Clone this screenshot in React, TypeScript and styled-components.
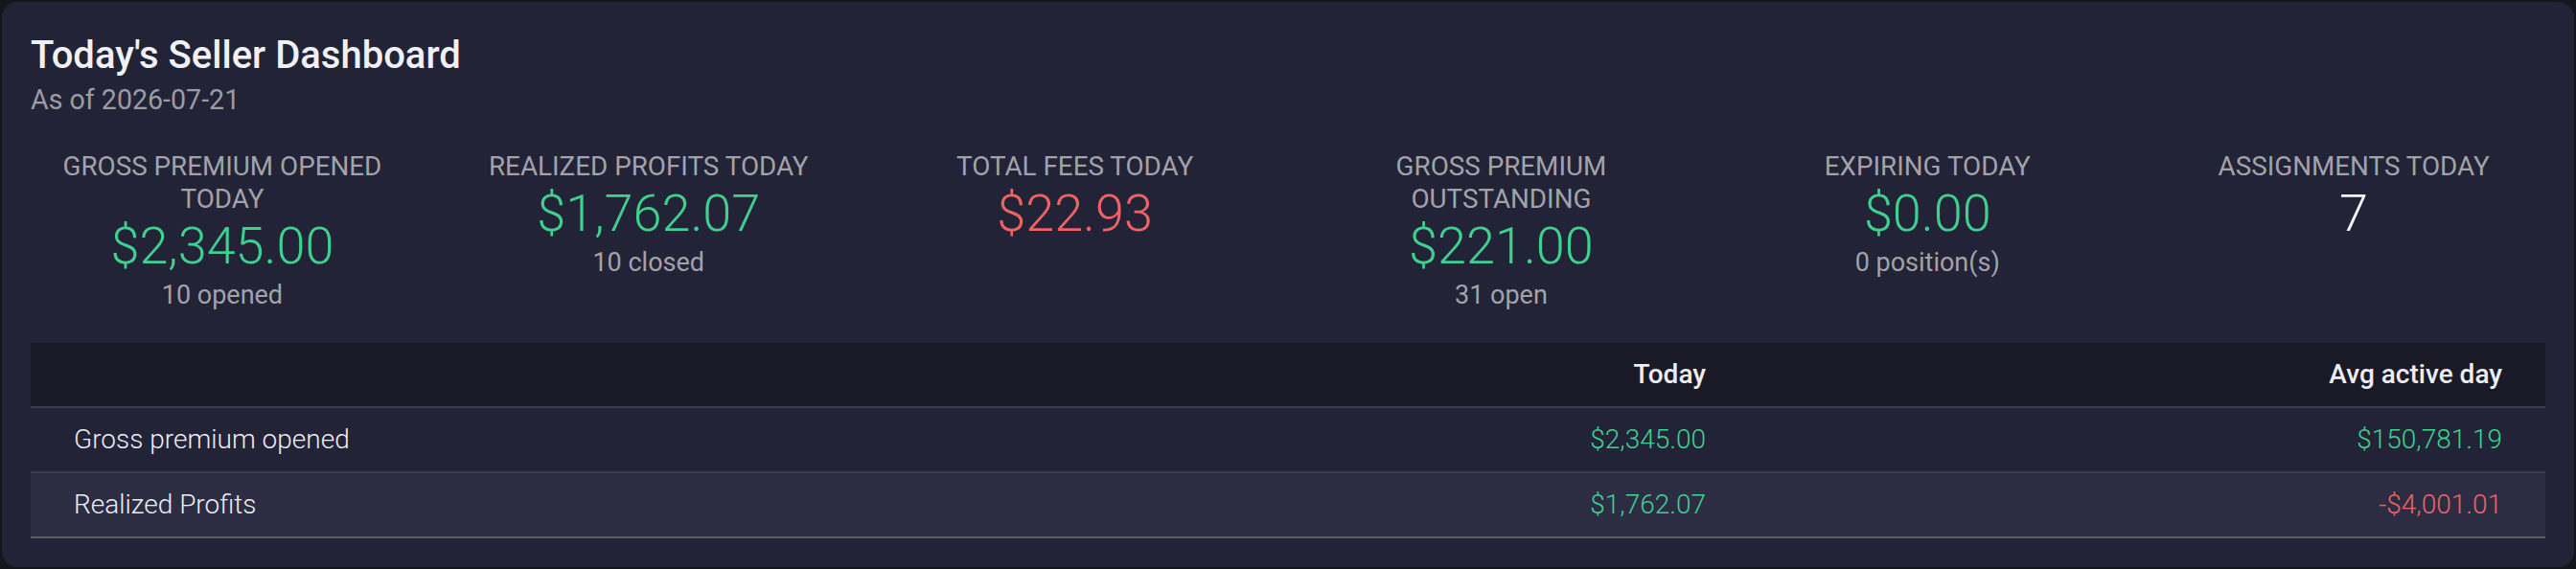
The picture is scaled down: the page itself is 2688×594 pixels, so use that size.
import React from "react";
import styled, { createGlobalStyle } from "styled-components";

type Tone = "up" | "down" | "plain";

interface Stat {
  label: string;
  value: string;
  tone: Tone;
  note?: string;
}

interface Row {
  name: string;
  today: string;
  todayTone: Tone;
  avg: string;
  avgTone: Tone;
}

const stats: Stat[] = [
  { label: "Gross premium opened today", value: "$2,345.00", tone: "up", note: "10 opened" },
  { label: "Realized profits today", value: "$1,762.07", tone: "up", note: "10 closed" },
  { label: "Total fees today", value: "$22.93", tone: "down" },
  { label: "Gross premium outstanding", value: "$221.00", tone: "up", note: "31 open" },
  { label: "Expiring today", value: "$0.00", tone: "up", note: "0 position(s)" },
  { label: "Assignments today", value: "7", tone: "plain" },
];

const rows: Row[] = [
  { name: "Gross premium opened", today: "$2,345.00", todayTone: "up", avg: "$150,781.19", avgTone: "up" },
  { name: "Realized Profits", today: "$1,762.07", todayTone: "up", avg: "-$4,001.01", avgTone: "down" },
];

const toneColor = (tone: Tone) =>
  tone === "up" ? "#3fd08f" : tone === "down" ? "#ef6363" : "#f2f2f7";

const GlobalStyle = createGlobalStyle`
  html, body {
    margin: 0;
    padding: 0;
    background: #15151e;
    font-family: Roboto, "Liberation Sans", sans-serif;
  }
  #root {
    height: 594px;
    overflow: hidden;
  }
`;

const Card = styled.section`
  margin: 2px;
  height: 590px;
  box-sizing: border-box;
  padding: 32px 30px;
  background: #222336;
  border-radius: 16px;
`;

const Title = styled.h1`
  margin: 0;
  font-size: 40px;
  line-height: 48px;
  font-weight: 500;
  color: #f0f0f7;
`;

const Subtitle = styled.p`
  margin: 2px 0 0;
  font-size: 28.6px;
  line-height: 40px;
  color: #9b9ba3;
`;

const StatGrid = styled.div`
  display: grid;
  grid-template-columns: repeat(6, 1fr);
  column-gap: 45px;
  margin-top: 33px;
`;

const StatBox = styled.div`
  display: flex;
  flex-direction: column;
  align-items: center;
  text-align: center;
`;

const StatLabel = styled.div`
  font-size: 27.8px;
  line-height: 34px;
  text-transform: uppercase;
  color: #a2a2aa;
`;

const StatValue = styled.div<{ $tone: Tone }>`
  margin-top: 2px;
  font-size: 54px;
  line-height: 60px;
  font-weight: 300;
  color: ${(p) => toneColor(p.$tone)};
`;

const StatNote = styled.div`
  margin-top: 4px;
  font-size: 27px;
  line-height: 34px;
  color: #a2a2aa;
`;

const Table = styled.div`
  margin-top: 33px;
`;

const TableRow = styled.div<{ $variant: "head" | "plain" | "alt" }>`
  display: grid;
  grid-template-columns: 1fr 831px 831px;
  height: 66px;
  align-items: center;
  background: ${(p) =>
    p.$variant === "head" ? "#1a1a27" : p.$variant === "alt" ? "#2c2d42" : "transparent"};
  border-bottom: 2px solid ${(p) => (p.$variant === "alt" ? "#5c5c60" : "#3b3c4e")};
`;

const Cell = styled.div<{ $align?: "left" | "right"; $tone?: Tone; $head?: boolean }>`
  padding: 0 45px;
  font-size: 28px;
  line-height: 32px;
  font-weight: ${(p) => (p.$head ? 500 : 300)};
  text-align: ${(p) => p.$align ?? "left"};
  color: ${(p) => (p.$tone ? toneColor(p.$tone) : "#ececf3")};
`;

export default function App() {
  return (
    <>
      <GlobalStyle />
      <Card>
        <Title>Today's Seller Dashboard</Title>
        <Subtitle>As of 2026-07-21</Subtitle>

        <StatGrid>
          {stats.map((s) => (
            <StatBox key={s.label}>
              <StatLabel>{s.label}</StatLabel>
              <StatValue $tone={s.tone}>{s.value}</StatValue>
              {s.note && <StatNote>{s.note}</StatNote>}
            </StatBox>
          ))}
        </StatGrid>

        <Table>
          <TableRow $variant="head">
            <Cell $head />
            <Cell $head $align="right">Today</Cell>
            <Cell $head $align="right">Avg active day</Cell>
          </TableRow>
          {rows.map((r, i) => (
            <TableRow key={r.name} $variant={i % 2 === 1 ? "alt" : "plain"}>
              <Cell>{r.name}</Cell>
              <Cell $align="right" $tone={r.todayTone}>{r.today}</Cell>
              <Cell $align="right" $tone={r.avgTone}>{r.avg}</Cell>
            </TableRow>
          ))}
        </Table>
      </Card>
    </>
  );
}
